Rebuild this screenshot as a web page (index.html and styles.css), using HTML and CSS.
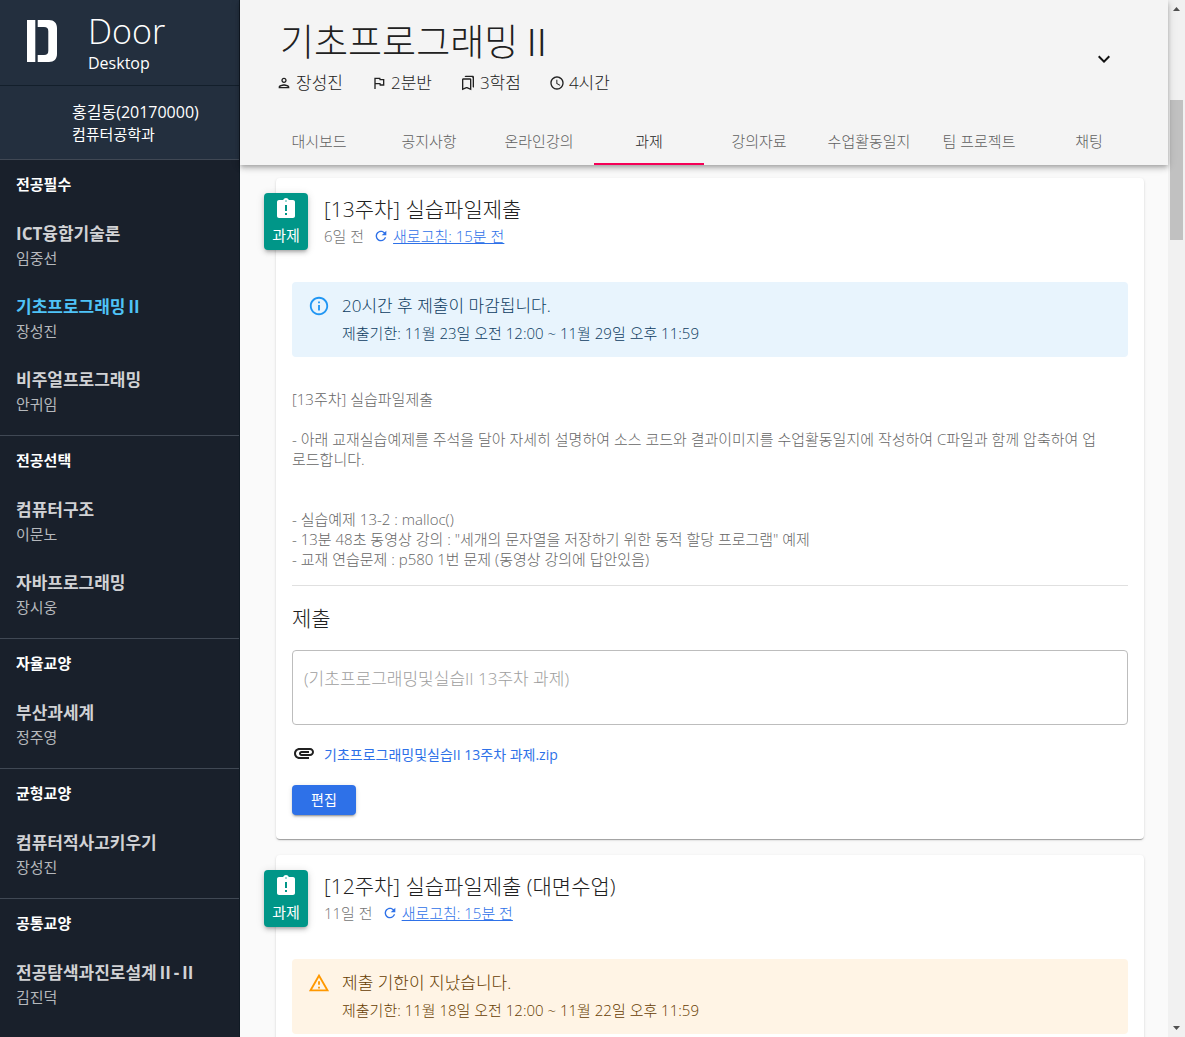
FILE: index.html
```html
<!DOCTYPE html>
<html lang="ko">
<head>
<meta charset="utf-8">
<title>Door Desktop</title>
<link rel="stylesheet" href="styles.css">
</head>
<body>
<div class="app">
  <aside class="sidebar">
    <div class="brand">
      <svg class="brand-logo" viewBox="0 0 32 42" aria-hidden="true"><path d="M1 0h8.300v42H1zM11.700 0H23c5 0 8 3 8 8v26c0 5-3 8-8 8H11.700v-7h6.300c3 0 4.300-1.300 4.300-4.300V11.300c0-3-1.300-4.300-4.300-4.300h-6.300z"/></svg>
      <div>
        <div class="brand-name">Door</div>
        <div class="brand-sub">Desktop</div>
      </div>
    </div>
    <div class="user">
      <div class="user-name">홍길동(20170000)</div>
      <div class="user-dept">컴퓨터공학과</div>
    </div>
    <nav>
      <section class="group">
        <h2>전공필수</h2>
        <a class="course" href="#"><b>ICT융합기술론</b><span>임중선</span></a>
        <a class="course active" href="#"><b>기초프로그래밍<span class="numeral">Ⅱ</span></b><span>장성진</span></a>
        <a class="course" href="#"><b>비주얼프로그래밍</b><span>안귀임</span></a>
      </section>
      <section class="group">
        <h2>전공선택</h2>
        <a class="course" href="#"><b>컴퓨터구조</b><span>이문노</span></a>
        <a class="course" href="#"><b>자바프로그래밍</b><span>장시웅</span></a>
      </section>
      <section class="group">
        <h2>자율교양</h2>
        <a class="course" href="#"><b>부산과세계</b><span>정주영</span></a>
      </section>
      <section class="group">
        <h2>균형교양</h2>
        <a class="course" href="#"><b>컴퓨터적사고키우기</b><span>장성진</span></a>
      </section>
      <section class="group">
        <h2>공통교양</h2>
        <a class="course" href="#"><b>전공탐색과진로설계<span class="numeral">Ⅱ</span>-<span class="numeral">Ⅱ</span></b><span>김진덕</span></a>
      </section>
    </nav>
  </aside>

  <main class="main">
    <header class="header">
      <div class="header-top">
        <div>
          <h1>기초프로그래밍<span class="numeral">Ⅱ</span></h1>
          <ul class="meta">
            <li><svg viewBox="0 0 24 24"><path d="M12 6c1.100 0 2 .9 2 2s-.9 2-2 2-2-.9-2-2 .9-2 2-2m0 10c2.700 0 5.800 1.290 6 2H6c.23-.72 3.310-2 6-2m0-12C9.790 4 8 5.790 8 8s1.790 4 4 4 4-1.790 4-4-1.790-4-4-4zm0 10c-2.670 0-8 1.340-8 4v2h16v-2c0-2.660-5.330-4-8-4z"/></svg>장성진</li>
            <li><svg viewBox="0 0 24 24"><path d="M12.360 6l.4 2H18v6h-3.360l-.4-2H7V6h5.360M14 4H5v17h2v-7h5.600l.4 2h7V6h-5.600L14 4z"/></svg>2분반</li>
            <li><svg viewBox="0 0 24 24"><path d="M15 7v12.970l-4.210-1.810-.79-.34-.79.340L5 19.970V7h10m4-6H8.990C7.890 1 7 1.900 7 3h10c1.100 0 2 .9 2 2v13l2 1V3c0-1.100-.9-2-2-2zm-4 4H5c-1.100 0-2 .9-2 2v16l7-3 7 3V7c0-1.100-.9-2-2-2z"/></svg>3학점</li>
            <li><svg viewBox="0 0 24 24"><path d="M11.990 2C6.470 2 2 6.480 2 12s4.470 10 9.990 10C17.520 22 22 17.520 22 12S17.520 2 11.990 2zM12 20c-4.420 0-8-3.580-8-8s3.580-8 8-8 8 3.580 8 8-3.580 8-8 8zm.5-13H11v6l5.250 3.150.75-1.230-4.500-2.670z"/></svg>4시간</li>
          </ul>
        </div>
        <button class="expand" type="button" aria-label="펼치기"><svg viewBox="0 0 24 24"><path d="M16.590 8.590L12 13.170 7.410 8.590 6 10l6 6 6-6z"/></svg></button>
      </div>
      <nav class="tabs">
        <button type="button">대시보드</button>
        <button type="button">공지사항</button>
        <button type="button">온라인강의</button>
        <button type="button" class="selected">과제</button>
        <button type="button">강의자료</button>
        <button type="button">수업활동일지</button>
        <button type="button">팀 프로젝트</button>
        <button type="button">채팅</button>
      </nav>
    </header>

    <div class="feed">
      <article class="card">
        <div class="card-head">
          <div class="badge"><svg viewBox="0 0 24 24"><path d="M19 3h-4.180C14.400 1.840 13.300 1 12 1s-2.400.84-2.820 2H5c-1.100 0-2 .9-2 2v14c0 1.100.9 2 2 2h14c1.100 0 2-.9 2-2V5c0-1.100-.9-2-2-2zm-6 15h-2v-2h2v2zm0-4h-2V8h2v6zm-1-9.250c-.41 0-.75-.34-.75-.75s.34-.75.750-.75.750.34.750.750-.34.750-.75.750z"/></svg>과제</div>
          <div>
            <h3>[13주차] 실습파일제출</h3>
            <div class="when">6일 전 <svg viewBox="0 0 24 24"><path d="M17.650 6.350C16.200 4.900 14.210 4 12 4c-4.420 0-7.990 3.580-7.990 8s3.570 8 7.990 8c3.730 0 6.840-2.550 7.730-6h-2.080c-.82 2.330-3.040 4-5.650 4-3.310 0-6-2.690-6-6s2.690-6 6-6c1.660 0 3.140.69 4.220 1.780L13 11h7V4l-2.350 2.350z"/></svg><a href="#">새로고침: 15분 전</a></div>
          </div>
        </div>
        <div class="alert info">
          <svg viewBox="0 0 24 24"><path d="M11 7h2v2h-2zm0 4h2v6h-2zm1-9C6.480 2 2 6.480 2 12s4.480 10 10 10 10-4.480 10-10S17.520 2 12 2zm0 18c-4.410 0-8-3.590-8-8s3.590-8 8-8 8 3.590 8 8-3.590 8-8 8z"/></svg>
          <div>
            <div class="alert-title">20시간 후 제출이 마감됩니다.</div>
            <div class="alert-sub">제출기한: 11월 23일 오전 12:00 ~ 11월 29일 오후 11:59</div>
          </div>
        </div>
        <div class="body">[13주차] 실습파일제출

- 아래 교재실습예제를 주석을 달아 자세히 설명하여 소스 코드와 결과이미지를 수업활동일지에 작성하여 C파일과 함께 압축하여 업로드합니다.


- 실습예제 13-2 : malloc()
- 13분 48초 동영상 강의 : "세개의 문자열을 저장하기 위한 동적 할당 프로그램" 예제
- 교재 연습문제 : p580 1번 문제 (동영상 강의에 답안있음)</div>
        <div class="submit">
          <h4 id="submit-title">제출</h4>
          <textarea aria-labelledby="submit-title" disabled>(기초프로그래밍및실습II 13주차 과제)</textarea>
          <div class="file"><svg viewBox="0 0 24 24"><path d="M2 12.500C2 9.460 4.460 7 7.500 7H18c2.210 0 4 1.790 4 4s-1.790 4-4 4H9.500C8.120 15 7 13.880 7 12.500S8.120 10 9.500 10H17v2H9.410c-.55 0-.55 1 0 1H18c1.100 0 2-.9 2-2s-.9-2-2-2H7.500C5.570 9 4 10.570 4 12.500S5.570 16 7.500 16H17v2H7.500C4.460 18 2 15.540 2 12.500z"/></svg><a href="#">기초프로그래밍및실습II 13주차 과제.zip</a></div>
          <button class="edit" type="button">편집</button>
        </div>
      </article>

      <article class="card">
        <div class="card-head">
          <div class="badge"><svg viewBox="0 0 24 24"><path d="M19 3h-4.180C14.400 1.840 13.300 1 12 1s-2.400.84-2.820 2H5c-1.100 0-2 .9-2 2v14c0 1.100.9 2 2 2h14c1.100 0 2-.9 2-2V5c0-1.100-.9-2-2-2zm-6 15h-2v-2h2v2zm0-4h-2V8h2v6zm-1-9.250c-.41 0-.75-.34-.75-.75s.34-.75.750-.75.750.34.750.750-.34.750-.75.750z"/></svg>과제</div>
          <div>
            <h3>[12주차] 실습파일제출 (대면수업)</h3>
            <div class="when">11일 전 <svg viewBox="0 0 24 24"><path d="M17.650 6.350C16.200 4.900 14.210 4 12 4c-4.420 0-7.990 3.580-7.990 8s3.570 8 7.990 8c3.730 0 6.840-2.550 7.730-6h-2.080c-.82 2.330-3.040 4-5.650 4-3.310 0-6-2.690-6-6s2.690-6 6-6c1.660 0 3.140.69 4.220 1.780L13 11h7V4l-2.350 2.350z"/></svg><a href="#">새로고침: 15분 전</a></div>
          </div>
        </div>
        <div class="alert warning">
          <svg viewBox="0 0 24 24"><path d="M12 5.990L19.530 19H4.470L12 5.990M12 2L1 21h22L12 2zm1 14h-2v2h2v-2zm0-6h-2v4h2v-4z"/></svg>
          <div>
            <div class="alert-title">제출 기한이 지났습니다.</div>
            <div class="alert-sub">제출기한: 11월 18일 오전 12:00 ~ 11월 22일 오후 11:59</div>
          </div>
        </div>
      </article>
    </div>
  </main>

  <div class="scrollbar" aria-hidden="true">
    <svg viewBox="0 0 17 17"><path d="M5 11h7L8.500 7z"/></svg>
    <div class="thumb"></div>
    <svg viewBox="0 0 17 17"><path d="M5 6h7l-3.500 4z"/></svg>
  </div>
</div>
</body>
</html>
```

FILE: styles.css
```css
* {
  box-sizing: border-box;
}

body {
  margin: 0;
  font-family: "Open Sans", "Noto Sans CJK KR", sans-serif;
  font-weight: 300;
  font-size: 15px;
  line-height: 20px;
  color: #212121;
  background: #fafafa;
}

h1, h2, h3, h4, ul {
  margin: 0;
  padding: 0;
  font-weight: inherit;
}

button, textarea {
  font: inherit;
}

svg {
  display: block;
  flex: none;
  fill: currentColor;
}

.app {
  display: flex;
  height: 100vh;
  overflow: hidden;
}

/* Roman numerals with joined bars */
.numeral {
  font-family: "Noto Sans CJK JP", sans-serif;
  line-height: 1;
}

/* Sidebar */
.sidebar {
  flex: none;
  width: 240px;
  overflow-y: auto;
  scrollbar-width: none;
  color: #fff;
  background: #19202b;
  border-right: 1px solid #101a24;
  font-weight: 400;
}

.brand {
  display: flex;
  align-items: center;
  gap: 30px;
  height: 86px;
  padding: 0 26px;
  background: #232f3e;
  border-bottom: 1px solid #131f2b;
}

.brand-logo {
  width: 32px;
  height: 42px;
  margin-bottom: 4px;
}

.brand-name {
  font-size: 34px;
  line-height: 40px;
  font-weight: 300;
}

.brand-sub {
  font-size: 16px;
  line-height: 24px;
}

.user {
  padding: 14px 16px 15px 72px;
  background: #232f3e;
  border-bottom: 1px solid #404854;
}

.user-name {
  font-size: 16px;
  line-height: 24px;
}

.group {
  padding-bottom: 8px;
}

.group + .group {
  border-top: 1px solid #404854;
}

.group h2 {
  padding: 0 16px;
  font-size: 15px;
  line-height: 48px;
  font-weight: 700;
}

.course {
  display: grid;
  gap: 2px;
  padding: 14px 16px 13px;
  color: #b5b8bc;
  text-decoration: none;
}

.course b {
  font-size: 17px;
  line-height: 24px;
  color: #d1d2d5;
}

.course.active b {
  color: #4fc3f7;
}

/* Course header */
.main {
  flex: 1;
  min-width: 0;
  display: flex;
  flex-direction: column;
}

.header {
  position: relative;
  z-index: 1;
  padding: 16px 24px 0;
  background: #f4f4f4;
  box-shadow: 0 2px 4px -1px rgba(0, 0, 0, .2), 0 4px 5px rgba(0, 0, 0, .14), 0 1px 10px rgba(0, 0, 0, .12);
}

.header-top {
  display: flex;
  justify-content: space-between;
  align-items: flex-end;
  padding: 0 16px 22px 12px;
}

h1 {
  padding-left: 4px;
  font-size: 37px;
  line-height: 52px;
}

.meta {
  display: flex;
  gap: 28px;
  padding-top: 3px;
  list-style: none;
  font-size: 17px;
  line-height: 24px;
}

.meta li {
  display: flex;
  align-items: center;
  gap: 4px;
}

.meta svg {
  width: 16px;
  height: 16px;
}

.expand {
  padding: 12px;
  margin-bottom: 12px;
  border: 0;
  background: none;
  color: #111;
}

.expand svg {
  width: 24px;
  height: 24px;
}

.tabs {
  display: flex;
}

.tabs button {
  flex: 1;
  height: 48px;
  padding: 2px 0 0;
  border: 0;
  border-bottom: 2px solid transparent;
  background: none;
  color: #606060;
  white-space: nowrap;
}

.tabs .selected {
  color: #212121;
  border-color: #f50057;
}

/* Assignment feed */
.feed {
  flex: 1;
  min-height: 0;
  overflow-y: auto;
  scrollbar-width: none;
  display: flex;
  flex-direction: column;
  gap: 16px;
  padding: 13px 24px 13px 36px;
}

.card {
  flex: none;
  padding: 15px 16px 24px;
  border-radius: 4px;
  background: #fff;
  box-shadow: 0 2px 1px -1px rgba(0, 0, 0, .2), 0 1px 1px rgba(0, 0, 0, .14), 0 1px 3px rgba(0, 0, 0, .12);
}

.card-head {
  display: flex;
  gap: 16px;
  margin: 0 0 32px -28px;
}

.badge {
  display: flex;
  flex-direction: column;
  align-items: center;
  gap: 4px;
  width: 44px;
  height: 57px;
  padding: 4px 0;
  border-radius: 4px;
  color: #fff;
  background: #009688;
  font-weight: 400;
  box-shadow: 0 3px 3px -2px rgba(0, 0, 0, .2), 0 3px 4px rgba(0, 0, 0, .14), 0 1px 8px rgba(0, 0, 0, .12);
}

.badge svg {
  width: 24px;
  height: 24px;
}

h3, h4 {
  font-size: 21px;
  line-height: 32px;
}

.when {
  display: flex;
  align-items: center;
  padding-top: 1px;
  color: #757575;
}

.when svg {
  width: 16px;
  height: 16px;
  margin: 0 4px 0 9px;
  color: #2e71e8;
}

a {
  color: #2e71e8;
}

.alert {
  display: flex;
  gap: 12px;
  padding: 12px 16px 14px;
  border-radius: 4px;
}

.alert svg {
  width: 22px;
  height: 24px;
}

.alert-title {
  font-size: 17px;
  line-height: 24px;
}

.alert-sub {
  padding-top: 5px;
}

.info {
  color: #0d3c61;
  background: #e8f4fd;
}

.info svg {
  color: #2196f3;
}

.warning {
  color: #663c00;
  background: #fff4e5;
}

.warning svg {
  color: #ff9800;
}

.body {
  padding: 32px 20px 16px 0;
  white-space: pre-wrap;
  word-break: break-all;
  color: #666;
}

.submit {
  display: flex;
  flex-direction: column;
  align-items: flex-start;
  padding-top: 16px;
  border-top: 1px solid #e0e0e0;
}

textarea {
  display: block;
  width: 100%;
  height: 75px;
  margin-top: 16px;
  padding: 16px 11px;
  border: 1px solid #bdbdbd;
  border-radius: 4px;
  resize: none;
  font-size: 17px;
  line-height: 24px;
  color: #9e9e9e;
  background: #fff;
}

.file {
  display: flex;
  align-items: center;
  gap: 8px;
  height: 60px;
  font-size: 14px;
  font-weight: 400;
}

.file a {
  text-decoration: none;
}

.file svg {
  width: 24px;
  height: 24px;
  margin-bottom: 4px;
}

.edit {
  width: 64px;
  height: 30px;
  border: 0;
  border-radius: 4px;
  color: #fff;
  background: #2e71e8;
  font-size: 14px;
  font-weight: 400;
  box-shadow: 0 3px 1px -2px rgba(0, 0, 0, .2), 0 2px 2px rgba(0, 0, 0, .14), 0 1px 5px rgba(0, 0, 0, .12);
}

/* Scroll track at the window edge */
.scrollbar {
  flex: none;
  display: flex;
  flex-direction: column;
  width: 17px;
  color: #505050;
  background: #f1f1f1;
}

.scrollbar svg {
  width: 17px;
  height: 17px;
}

.thumb {
  width: 13px;
  height: 140px;
  margin: 83px 2px auto;
  background: #c1c1c1;
}
```
